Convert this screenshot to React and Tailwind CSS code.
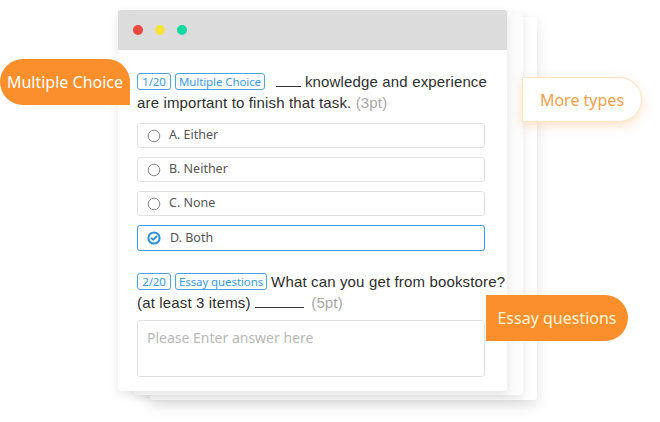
import React from 'react';

const options = [
  { label: 'A. Either', checked: false },
  { label: 'B. Neither', checked: false },
  { label: 'C. None', checked: false },
  { label: 'D. Both', checked: true },
];

function Tag({ children }) {
  return (
    <span className="inline-flex items-center justify-center min-w-[34px] h-[17px] px-[3px] mr-[4px] border border-[#4aa3e4] rounded-[3px] font-['Noto_Sans',sans-serif] text-[11.5px] tracking-[-0.1px] leading-none text-[#3a9be2] align-[1px]">
      {children}
    </span>
  );
}

function Radio({ checked }) {
  if (checked) {
    return (
      <svg width="14" height="14" viewBox="0 0 14 14" className="shrink-0">
        <circle cx="7" cy="7" r="5.6" fill="none" stroke="#2d8fdc" strokeWidth="2" />
        <path d="M4.4 7.1 L6.3 8.9 L9.6 5.5" fill="none" stroke="#2d8fdc" strokeWidth="1.8" strokeLinecap="round" strokeLinejoin="round" />
      </svg>
    );
  }
  return (
    <svg width="14" height="14" viewBox="0 0 14 14" className="shrink-0">
      <circle cx="7" cy="7" r="5.8" fill="none" stroke="#8a8a8a" strokeWidth="1" />
    </svg>
  );
}

export default function App() {
  return (
    <div className="relative w-[660px] h-[422px] bg-white overflow-hidden font-['Noto_Sans',sans-serif]">
      {/* stacked cards behind */}
      <div className="absolute left-[150px] top-[17px] w-[387px] h-[383px] bg-white rounded-[3px] shadow-[0_6px_14px_rgba(0,0,0,0.12)]" />
      <div className="absolute left-[134px] top-[12px] w-[389px] h-[383px] bg-[#fcfcfc] rounded-[3px] shadow-[0_4px_10px_rgba(0,0,0,0.10)]" />

      {/* main window */}
      <div className="relative ml-[118px] mt-[10px] w-[389px] h-[381px] bg-white rounded-[3px] overflow-hidden shadow-[0_3px_10px_rgba(0,0,0,0.10)]">
        <div className="h-[40px] bg-[#dcdcdc] flex items-center gap-[12px] pl-[15px]">
          <span className="w-[10px] h-[10px] rounded-full bg-[#e9473f]" />
          <span className="w-[10px] h-[10px] rounded-full bg-[#f6e33a]" />
          <span className="w-[10px] h-[10px] rounded-full bg-[#11d9a0]" />
        </div>

        <div className="pl-[19px] pt-[21px]">
          <p className="pr-[12px] font-['Liberation_Sans',sans-serif] text-[15px] tracking-[0.15px] leading-[21px] text-[#2e2e2e]">
            <Tag>1/20</Tag>
            <Tag>Multiple Choice</Tag>
            <span className="inline-block w-[25px] border-b border-[#333] ml-[7px] mr-[4px]" />
            knowledge and experience are important to finish that task.{' '}
            <span className="text-[#a8a8a8]">(3pt)</span>
          </p>

          <div className="mt-[10px] mr-[22px] flex flex-col gap-[9px]">
            {options.map((o) => (
              <div
                key={o.label}
                className={
                  o.checked
                    ? 'h-[26px] flex items-center gap-[9px] pl-[9px] border border-[#3a9be2] rounded-[3px]'
                    : 'h-[25px] flex items-center gap-[8px] pl-[9px] border border-[#e2e2e2] rounded-[3px]'
                }
              >
                <Radio checked={o.checked} />
                <span className="text-[12.5px] text-[#555]">{o.label}</span>
              </div>
            ))}
          </div>

          <p className="mt-[20px] mr-[-8px] font-['Liberation_Sans',sans-serif] text-[15px] tracking-[0.15px] leading-[21px] text-[#2e2e2e]">
            <Tag>2/20</Tag>
            <Tag>Essay questions</Tag>
            What can you get from bookstore? (at least 3 items){' '}
            <span className="inline-block w-[49px] border-b border-[#333] mr-[3px]" />{' '}
            <span className="text-[#a8a8a8]">(5pt)</span>
          </p>

          <div className="mt-[7px] mr-[22px] h-[57px] border border-[#e2e2e2] rounded-[3px] px-[9px] pt-[6px] text-[14px] text-[#b8b8b8]">
            Please Enter answer here
          </div>
        </div>
      </div>

      {/* floating labels */}
      <div className="absolute left-0 top-[59px] w-[130px] h-[46px] flex items-center justify-center bg-[#fb8f2b] text-white text-[16px] rounded-tl-[23px] rounded-bl-[23px] rounded-tr-[23px]">
        Multiple Choice
      </div>
      <div className="absolute left-[522px] top-[77px] w-[120px] h-[45px] flex items-center justify-center bg-white border border-[#fde4c4] text-[#f2a04c] text-[16px] rounded-tl-[14px] rounded-bl-[22px] rounded-r-full shadow-[0_4px_12px_rgba(251,143,43,0.25)]">
        More types
      </div>
      <div className="absolute left-[486px] top-[295px] w-[142px] h-[46px] flex items-center justify-center bg-[#fb8f2b] text-[#fff4d8] text-[16px] rounded-tl-[14px] rounded-bl-[23px] rounded-r-full">
        Essay questions
      </div>
    </div>
  );
}
